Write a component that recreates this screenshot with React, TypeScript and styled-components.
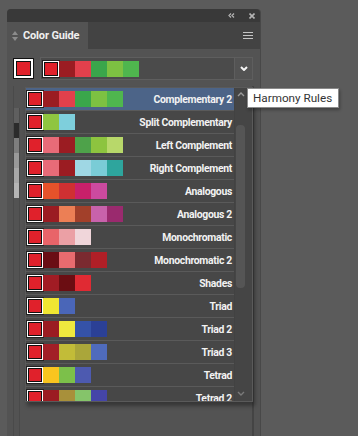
import styled, { createGlobalStyle } from "styled-components";

const GlobalStyle = createGlobalStyle`
	html, body {
		margin: 0;
		padding: 0;
		background: #5b5b5b;
		font-family: Roboto, "Noto Sans", sans-serif;
	}
`;

const BASE = "#e0212b";

const rules = [
	{ name: "Complementary 2", colors: ["#9b1c22", "#e2404c", "#3aa64b", "#7dc142", "#4fb64e"] },
	{ name: "Split Complementary", colors: ["#8fc540", "#7ecfdc"] },
	{ name: "Left Complement", colors: ["#e86b78", "#9b1c22", "#4ea24a", "#8dc43f", "#b8d86a"] },
	{ name: "Right Complement", colors: ["#e86b78", "#9b1c22", "#9fd7e4", "#7accd6", "#2ea59d"] },
	{ name: "Analogous", colors: ["#e6522a", "#cf3032", "#c8206a", "#cc4a9f"] },
	{ name: "Analogous 2", colors: ["#9b1c22", "#ec7f55", "#a2402a", "#c862ab", "#9a2a6e"] },
	{ name: "Monochromatic", colors: ["#e86469", "#eba0a5", "#f0d6da"] },
	{ name: "Monochromatic 2", colors: ["#6a0e14", "#e86b6f", "#7a2a30", "#b01f27"] },
	{ name: "Shades", colors: ["#a11c24", "#6b0d12", "#e02a33"] },
	{ name: "Triad", colors: ["#f0e632", "#4a66b8"] },
	{ name: "Triad 2", colors: ["#9b1c22", "#efe83e", "#3552a8", "#2b4096"] },
	{ name: "Triad 3", colors: ["#a21f27", "#c2bc38", "#aaa63a", "#4f6bbc"] },
	{ name: "Tetrad", colors: ["#f9c51f", "#7cc04a", "#4d5ab0"] },
	{ name: "Tetrad 2", colors: ["#9b1c22", "#a8903a", "#85c46a", "#4545a8"] },
];

const chips = ["#5f5f5f", "#2b2b2b", "#7e7e7e", "#9a9a9a", "#a8a8a8", "#b5b5b5"];

const Stage = styled.div`
	position: relative;
	width: 358px;
	height: 436px;
	overflow: hidden;
	padding: 9px 0 0 7px;
	box-sizing: border-box;
`;

const Panel = styled.div`
	display: flex;
	flex-direction: column;
	width: 253px;
	height: 427px;
	background: #535353;
	border-radius: 4px 4px 0 0;
	box-shadow: 1px 0 0 #484848;
`;

const TitleBar = styled.div`
	display: flex;
	align-items: center;
	justify-content: flex-end;
	gap: 14px;
	height: 13px;
	padding-right: 5px;
	background: #393939;
	border-radius: 4px 4px 0 0;
	color: #b4b4b4;
`;

const TabRow = styled.div`
	display: flex;
	align-items: center;
	height: 27px;
	background: #434343;
`;

const Tab = styled.div`
	display: flex;
	align-items: center;
	gap: 5px;
	width: 81px;
	height: 100%;
	padding-left: 5px;
	box-sizing: border-box;
	background: #535353;
	color: #f0f0f0;
	font-size: 11px;
	font-weight: 700;
	letter-spacing: -0.15px;
`;

const MenuButton = styled.div`
	margin-left: auto;
	margin-right: 7px;
	display: flex;
	flex-direction: column;
	gap: 2px;
	span {
		display: block;
		width: 10px;
		height: 1px;
		background: #c4c4c4;
	}
`;

const Body = styled.div`
	position: relative;
	flex: 1;
	display: flex;
	flex-direction: column;
	padding: 8px 7px 0 6px;
`;

const SwatchRow = styled.div`
	display: flex;
	align-items: center;
	gap: 6px;
	height: 23px;
`;

const BaseSwatch = styled.div`
	width: 21px;
	height: 21px;
	box-sizing: border-box;
	border: 1px solid #111;
	background: ${BASE};
	box-shadow: inset 0 0 0 2px #fff, inset 0 0 0 3px #111;
`;

const HarmonyBar = styled.div`
	flex: 1;
	height: 23px;
	box-sizing: border-box;
	display: flex;
	align-items: center;
	padding-left: 2px;
	border: 1px solid #5e5e5e;
	background: #4b4b4b;
`;

const Chevron = styled.div`
	margin-left: auto;
	width: 17px;
	height: 100%;
	display: flex;
	align-items: center;
	justify-content: center;
	border-left: 1px solid #5e5e5e;
	background: #535353;
`;

const Swatch = styled.div<{ $color: string }>`
	width: 16px;
	height: 16px;
	flex-shrink: 0;
	background: ${(p) => p.$color};
`;

const BaseChip = styled(Swatch)`
	box-sizing: border-box;
	border: 1px solid #fff;
	box-shadow: inset 0 0 0 1px #111, 0 0 0 1px #222;
`;

const Variations = styled.div`
	flex: 1;
	margin-top: 6px;
	margin-right: -1px;
	display: flex;
	border-left: 1px solid #4a4a4a;
	border-right: 2px solid #444;
	padding-top: 22px;
`;

const ChipColumn = styled.div`
	display: flex;
	flex-direction: column;
	width: 5px;
	border-right: 1px solid #4a4a4a;
`;

const Chip = styled.div<{ $color: string }>`
	height: 15px;
	background: ${(p) => p.$color};
`;

const Dropdown = styled.div`
	position: absolute;
	left: 18px;
	top: 38px;
	width: 228px;
	height: 315px;
	box-sizing: border-box;
	display: flex;
	border: 1px solid #5a5a5a;
	background: #474747;
	box-shadow: 2px 4px 4px rgba(0, 0, 0, 0.35);
	overflow: hidden;
`;

const RuleList = styled.div`
	flex: 1;
	display: flex;
	flex-direction: column;
`;

const RuleRow = styled.div<{ $active?: boolean }>`
	flex-shrink: 0;
	display: flex;
	align-items: center;
	height: 22px;
	padding: 0 2px 0 1px;
	border-bottom: 1px solid #5a5a5a;
	background: ${(p) => (p.$active ? "#4c6488" : "transparent")};
`;

const RuleName = styled.span`
	margin-left: auto;
	padding-top: 1px;
	color: #f2f2f2;
	font-size: 10.4px;
	font-weight: 700;
	letter-spacing: -0.3px;
`;

const Scrollbar = styled.div`
	position: relative;
	width: 17px;
	border-left: 1px solid #424242;
	background: #454545;
`;

const ScrollThumb = styled.div`
	position: absolute;
	left: 1px;
	top: 37px;
	width: 9px;
	height: 163px;
	border-radius: 4px;
	background: #555;
`;

const ScrollArrow = styled.div<{ $down?: boolean }>`
	position: absolute;
	left: 1px;
	${(p) => (p.$down ? "bottom: 5px;" : "top: 4px;")}
	width: 9px;
	display: flex;
	justify-content: center;
	color: #8a8a8a;
`;

const Tooltip = styled.div`
	position: absolute;
	left: 247px;
	top: 88px;
	height: 18px;
	padding: 0 6px 0 5px;
	display: flex;
	align-items: center;
	background: #fff;
	border: 1px solid #8a8a8a;
	box-shadow: 1px 2px 3px rgba(0, 0, 0, 0.3);
	color: #333;
	font-size: 11.7px;
`;

function ChevronIcon({ down = true, size = 8, color = "currentColor", width = 1.6 }) {
	return (
		<svg width={size} height={size / 2 + 1} viewBox="0 0 8 5">
			<path
				d={down ? "M1 1 L4 4 L7 1" : "M1 4 L4 1 L7 4"}
				fill="none"
				stroke={color}
				strokeWidth={width}
			/>
		</svg>
	);
}

function App() {
	return (
		<Stage>
			<GlobalStyle />
			<Panel>
				<TitleBar>
					<svg width="7" height="5" viewBox="0 0 7 5">
						<path d="M3 0.5 L1 2.5 L3 4.5 M6 0.5 L4 2.5 L6 4.5" fill="none" stroke="currentColor" strokeWidth="1.2" />
					</svg>
					<svg width="6" height="6" viewBox="0 0 6 6">
						<path d="M0.5 0.5 L5.5 5.5 M5.5 0.5 L0.5 5.5" stroke="currentColor" strokeWidth="1.6" />
					</svg>
				</TitleBar>
				<TabRow>
					<Tab>
						<svg width="6" height="10" viewBox="0 0 6 10">
							<path d="M3 0 L6 4 L0 4 Z M3 10 L6 6 L0 6 Z" fill="#8c8c8c" />
						</svg>
						Color Guide
					</Tab>
					<MenuButton>
						<span />
						<span />
						<span />
					</MenuButton>
				</TabRow>
				<Body>
					<SwatchRow>
						<BaseSwatch />
						<HarmonyBar>
							<BaseChip $color={BASE} />
							{rules[0].colors.map((c, i) => (
								<Swatch key={i} $color={c} />
							))}
							<Chevron>
								<ChevronIcon color="#f4f4f4" width={2} />
							</Chevron>
						</HarmonyBar>
					</SwatchRow>
					<Variations>
						<ChipColumn>
							{chips.map((c, i) => (
								<Chip key={i} $color={c} />
							))}
						</ChipColumn>
					</Variations>
					<Dropdown>
						<RuleList>
							{rules.map((r, i) => (
								<RuleRow key={r.name} $active={i === 0}>
									<BaseChip $color={BASE} />
									{r.colors.map((c, j) => (
										<Swatch key={j} $color={c} />
									))}
									<RuleName>{r.name}</RuleName>
								</RuleRow>
							))}
						</RuleList>
						<Scrollbar>
							<ScrollArrow>
								<ChevronIcon down={false} color="#9a9a9a" width={1.4} />
							</ScrollArrow>
							<ScrollThumb />
							<ScrollArrow $down>
								<ChevronIcon color="#7a7a7a" width={1.4} />
							</ScrollArrow>
						</Scrollbar>
					</Dropdown>
				</Body>
			</Panel>
			<Tooltip>Harmony Rules</Tooltip>
		</Stage>
	);
}

export default App;
